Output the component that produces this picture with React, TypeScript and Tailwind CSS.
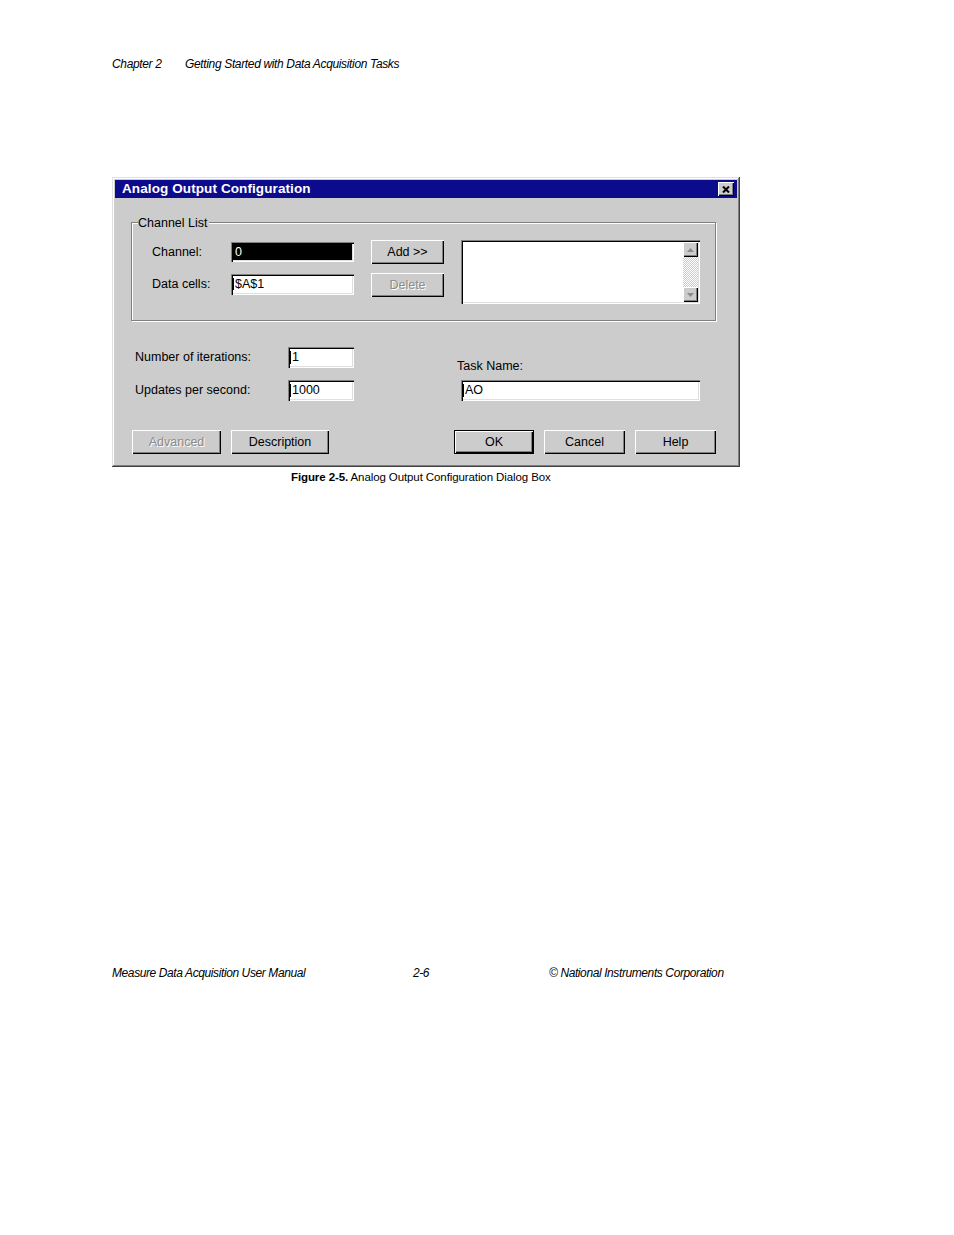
const raised =
  'shadow-[inset_1px_1px_#ffffff,inset_-1px_-1px_#000000,inset_-2px_-2px_#808080] bg-[#cccccc]';
const sunken =
  'shadow-[inset_1px_1px_#808080,inset_2px_2px_#000000,inset_-1px_-1px_#ffffff,inset_-2px_-2px_#dfdfdf]';
const disabledText = 'text-[#8c8c8c] [text-shadow:1px_1px_#ffffff]';

function Btn({
  label,
  w,
  disabled,
  def,
}: {
  label: string;
  w: string;
  disabled?: boolean;
  def?: boolean;
}) {
  if (def) {
    return (
      <div className={`${w} h-[24px] border border-black`}>
        <div className={`flex h-full w-full items-center justify-center ${raised}`}>
          {label}
        </div>
      </div>
    );
  }
  return (
    <div
      className={`${w} flex h-[24px] items-center justify-center ${raised} ${
        disabled ? disabledText : ''
      }`}
    >
      {label}
    </div>
  );
}

function Field({ value, w, h, dark }: { value: string; w: string; h: string; dark?: boolean }) {
  return (
    <div
      className={`${w} ${h} flex items-center pl-[2px] ${sunken} ${
        dark ? 'bg-black text-white' : 'bg-white text-black'
      }`}
    >
      <span className="border-l border-black pl-[1px] leading-none">{value}</span>
    </div>
  );
}

function Arrow({ up }: { up?: boolean }) {
  return (
    <div className={`flex h-[15px] w-[15px] items-center justify-center ${raised}`}>
      <svg width="7" height="4" viewBox="0 0 7 4">
        {up ? (
          <polygon points="3.5,0 7,4 0,4" fill="#8c8c8c" />
        ) : (
          <polygon points="0,0 7,0 3.5,4" fill="#8c8c8c" />
        )}
      </svg>
    </div>
  );
}

function Dialog() {
  return (
    <div className="ml-[112px] mt-[106px] h-[290px] w-[628px] bg-[#cccccc] p-[3px] text-[12.5px] text-black shadow-[inset_-1px_-1px_#404040,inset_1px_1px_#e0e0e0,inset_-2px_-2px_#808080,inset_2px_2px_#ffffff]">
      {/* title bar */}
      <div className="flex h-[18px] items-center justify-between bg-[#0b0b8c] pl-[7px] pr-[3px]">
        <span className="text-[13.5px] font-bold tracking-[0.1px] text-white">
          Analog Output Configuration
        </span>
        <div className={`flex h-[14px] w-[16px] items-center justify-center ${raised}`}>
          <svg width="8" height="7" viewBox="0 0 8 7">
            <path d="M1 0.5 L7 6.5 M7 0.5 L1 6.5" stroke="#000" strokeWidth="2" />
          </svg>
        </div>
      </div>

      {/* channel list group */}
      <div className="relative ml-[16px] mt-[24px] h-[99px] w-[585px] border border-[#808080] shadow-[inset_1px_1px_#ffffff,1px_1px_#ffffff]">
        <span className="absolute left-[6px] top-[-7px] bg-[#cccccc] pr-[1px] leading-[14px]">
          Channel List
        </span>
        <div className="flex items-start pl-[20px] pt-[17px]">
          <div className="flex flex-col gap-[8px]">
            <div className="flex h-[24px] items-center">
              <span className="w-[79px]">Channel:</span>
              <Field value="0" w="w-[123px]" h="h-[20px]" dark />
            </div>
            <div className="flex h-[24px] items-center">
              <span className="w-[79px]">Data cells:</span>
              <Field value="$A$1" w="w-[123px]" h="h-[21px]" />
            </div>
          </div>
          <div className="ml-[17px] flex flex-col gap-[9px]">
            <Btn label="Add >>" w="w-[73px]" />
            <Btn label="Delete" w="w-[73px]" disabled />
          </div>
          <div className={`ml-[17px] flex h-[64px] w-[239px] bg-white p-[2px] ${sunken}`}>
            <div className="flex-1" />
            <div className="flex w-[15px] flex-col bg-[repeating-conic-gradient(#ffffff_0_25%,#cccccc_0_50%)] bg-[length:2px_2px]">
              <Arrow up />
              <div className="flex-1" />
              <Arrow />
            </div>
          </div>
        </div>
      </div>

      {/* iterations / task name */}
      <div className="ml-[20px] mt-[26px] flex items-end">
        <div className="flex flex-col gap-[12px]">
          <div className="flex h-[21px] items-center">
            <span className="w-[153px]">Number of iterations:</span>
            <Field value="1" w="w-[66px]" h="h-[21px]" />
          </div>
          <div className="flex h-[21px] items-center">
            <span className="w-[153px]">Updates per second:</span>
            <Field value="1000" w="w-[66px]" h="h-[21px]" />
          </div>
        </div>
        <div className="ml-[103px] flex flex-col">
          <span className="leading-[14px]">Task Name:</span>
          <div className="ml-[4px] mt-[7px]">
            <Field value="AO" w="w-[239px]" h="h-[21px]" />
          </div>
        </div>
      </div>

      {/* buttons */}
      <div className="ml-[17px] mt-[29px] flex">
        <Btn label="Advanced" w="w-[89px]" disabled />
        <div className="ml-[10px]">
          <Btn label="Description" w="w-[98px]" />
        </div>
        <div className="ml-[125px]">
          <Btn label="OK" w="w-[80px]" def />
        </div>
        <div className="ml-[10px]">
          <Btn label="Cancel" w="w-[81px]" />
        </div>
        <div className="ml-[10px]">
          <Btn label="Help" w="w-[81px]" />
        </div>
      </div>
    </div>
  );
}

export default function App() {
  const narrow = "font-['Liberation_Sans',Arial,sans-serif]";
  return (
    <div className="h-[1235px] w-[954px] overflow-hidden bg-white font-['Liberation_Sans',Arial,sans-serif] text-black">
      <div
        className={`flex pl-[112px] pt-[57px] text-[12px] italic leading-[14px] tracking-[-0.35px] ${narrow}`}
      >
        <span className="w-[73px]">Chapter 2</span>
        <span>Getting Started with Data Acquisition Tasks</span>
      </div>

      <Dialog />

      <div
        className={`ml-[291px] mt-[3px] text-[11.5px] leading-[14px] tracking-[-0.1px] ${narrow}`}
      >
        <span className="font-bold">Figure 2-5.</span> Analog Output Configuration Dialog Box
      </div>

      <div
        className={`ml-[112px] mt-[482px] flex text-[12px] italic leading-[14px] tracking-[-0.4px] ${narrow}`}
      >
        <span className="w-[301px]">Measure Data Acquisition User Manual</span>
        <span className="w-[136px]">2-6</span>
        <span>© National Instruments Corporation</span>
      </div>
    </div>
  );
}
